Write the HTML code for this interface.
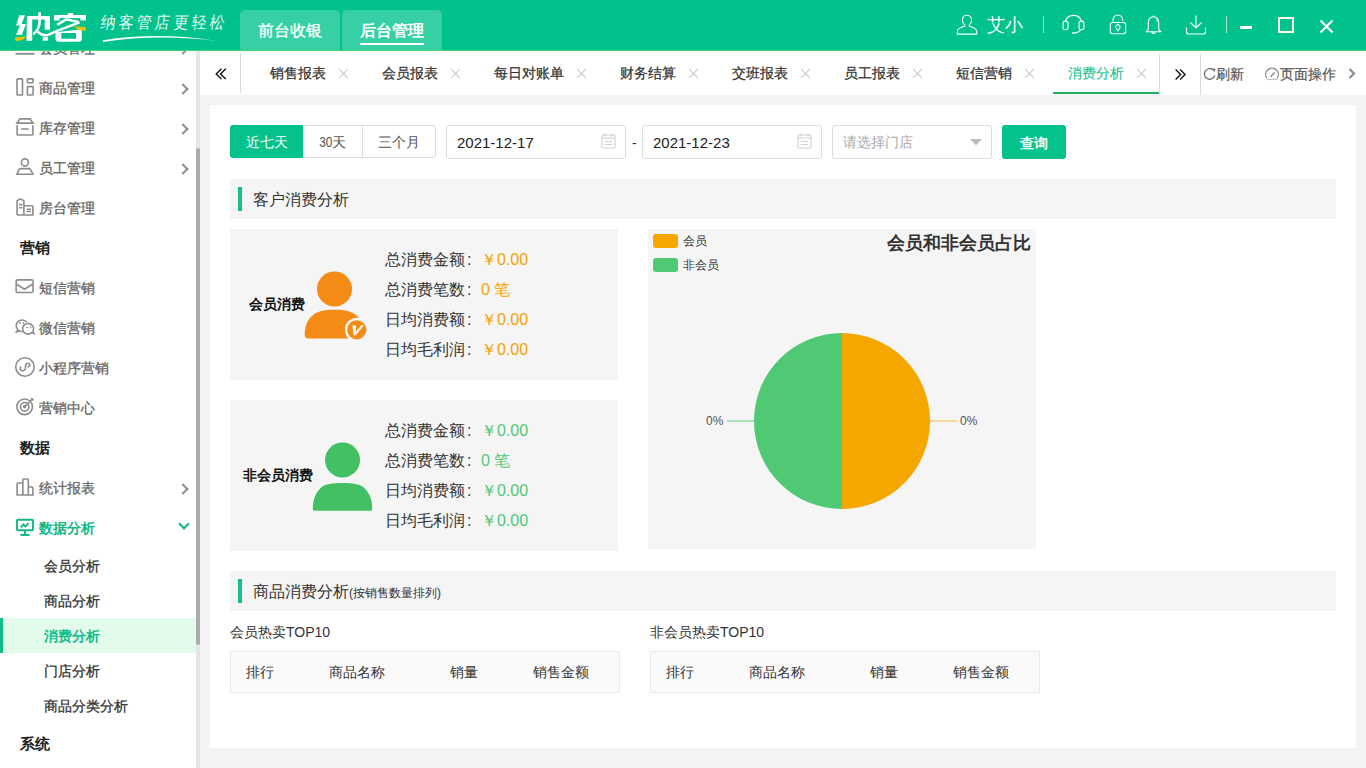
<!DOCTYPE html>
<html><head><meta charset="utf-8">
<style>
*{margin:0;padding:0;box-sizing:border-box}
html,body{width:1366px;height:768px;overflow:hidden;background:#f3f3f3;font-family:"Liberation Sans",sans-serif;color:#333}
.a{position:absolute}
#hdr{left:0;top:0;width:1366px;height:51px;background:#01c28c;border-bottom:1px solid #3fd86f;z-index:5}
.htab{top:10px;width:100px;height:40px;background:#36d0a4;border-radius:5px 5px 0 0;color:#fff;font-size:16px;line-height:22px;padding-top:10px;text-align:center;-webkit-text-stroke:0.3px #fff}
.htab.act{font-weight:bold;-webkit-text-stroke:0}
.htab i{position:absolute;left:18px;top:33px;width:64px;height:2px;background:#fff}
#side{left:0;top:51px;width:200px;height:717px;background:#fff;overflow:hidden}
#tabs{left:200px;top:51px;width:1166px;height:44px;background:#fff}
#card{left:210px;top:105px;width:1146px;height:643px;background:#fff}
.mi{position:absolute;left:0;width:196px;height:40px;font-size:14px;color:#666;-webkit-text-stroke:0.3px #666}
.mi .ic{position:absolute;left:16px;top:10px;fill:none;stroke:#8c8c8c;stroke-width:1.600;overflow:visible}
.mi span{position:absolute;left:39px;top:11px;line-height:18px}
.mi .ar{position:absolute;left:181px;top:15px;width:7px;height:10px}
.mi .ar:before{content:"";position:absolute;left:-2px;top:1.500px;width:6px;height:6px;border-right:2px solid #8e8e9a;border-top:2px solid #8e8e9a;transform:rotate(45deg)}
.mi.grn{color:#13b886;font-weight:bold;-webkit-text-stroke:0}
.mi.grn .ic{stroke:#13b886;stroke-width:1.900}
.mi .dn{position:absolute;left:178px;top:14px;width:11px;height:8px}
.mi .dn:before{content:"";position:absolute;left:2px;top:-2px;width:6px;height:6px;border-right:2.500px solid #13b886;border-bottom:2.500px solid #13b886;transform:rotate(45deg)}
.sec{position:absolute;left:20px;font-size:15px;color:#222;font-weight:bold;line-height:20px}
.sub{position:absolute;left:0;width:196px;height:35px;font-size:14px;color:#333;-webkit-text-stroke:0.3px #333}
.sub span{position:absolute;left:44px;top:9px;line-height:18px}
.sub.on{background:#e3fbea;color:#10bd89;font-weight:bold;-webkit-text-stroke:0}
.sub.on:before{content:"";position:absolute;left:0;top:0;width:3px;height:35px;background:#10bd89}
.tab{position:absolute;top:13px;font-size:14px;color:#333;line-height:18px;-webkit-text-stroke:0.25px currentColor}
.tx{position:absolute;top:18px;stroke:#c8c8c8;stroke-width:1.100;fill:none}
.inp{border:1px solid #dcdcdc;border-radius:3px;background:#fff}
.bg{border:1px solid #dcdcdc;border-radius:3px;background:#fff}
.dt{position:absolute;left:10px;top:8px;font-size:15px;color:#222;line-height:18px}
.cal{position:absolute;left:154px;top:7px}
.num{font-family:"Liberation Sans",sans-serif;display:inline-block;transform:scaleX(.85);margin:0 -1px}
.shd{background:#f5f5f5}
.shd i{position:absolute;left:8px;top:8px;width:4px;height:24px;background:#1bbf8b}
.shd span{position:absolute;left:23px;top:11px;font-size:16px;color:#333;line-height:20px}
.shd small{font-size:12px}
.gcard{background:#f5f5f5}
.lbl{font-size:14px;font-weight:bold;color:#111;line-height:18px}
.stats p{font-size:16px;color:#333;line-height:30px;height:30px;white-space:nowrap}
.stats b{font-weight:normal}
.stats i{font-style:normal;display:inline-block;width:16px;text-indent:2px}
.org b{color:#f5a300}
.grn2 b{color:#52c878}
.pl{font-size:12px;color:#555;line-height:16px}
.thd{width:390px;height:42px;background:#fafafa;border:1px solid #e8e8e8}
.thd span{position:absolute;top:11px;font-size:14px;color:#333;line-height:18px}
</style></head><body>
<div id="hdr" class="a">
  <svg class="a" style="left:0;top:0" width="100" height="50" viewBox="0 0 100 50">
    <g fill="#fff">
      <path d="M19.200 15.200H25L21.600 23.900H26L21.900 34.700H16.100L19.900 25.600H16.100z"/>
      <path d="M26.900 15.900H50V29.700H44.700V19.600H32.200V40.700H26.400z"/>
      <path d="M38.200 12.300H40.900V22C40.900 27 38.500 31.500 34 35.300L32.600 33.600C36.300 30.300 38.200 26.500 38.200 22z"/>
      <path d="M42.800 36.900H48.100V40.700H42.800z"/>
      <path d="M67.800 13.100H73.100V15.200H67.800z"/>
      <path d="M54.100 15H85.900V20.500H80.400V18H59.600V20.500H54.100z"/>
      <path d="M55.500 32.300L81.800 29.200V39C81.800 40.600 80.500 41.700 79 41.700H58.300C56.800 41.700 55.500 40.600 55.500 39zM61.300 33V38.800H76V33z" fill-rule="evenodd"/>
    </g>
    <g fill="none" stroke="#fff" stroke-width="2.500">
      <path d="M57.200 24.900L66 19.400 78.800 22"/>
      <path d="M37.800 31.600C40 34 42 35.200 45 35.200 49 35.200 52 33 57 30.800L79.500 22.300"/>
    </g>
    <path d="M15.100 37.400L25.500 36.400 24.800 37.900C23 39.200 21.500 40.200 19.700 40.700H15.400z" fill="#f8c000"/>
    <path d="M73.600 26.300L85.900 27.300 85.400 30.700 78.900 29.700z" fill="#f8c000"/>
  </svg>
  <div class="a" style="left:99px;top:13px;font-size:15px;color:rgba(255,255,255,.92);letter-spacing:3.2px;line-height:20px;transform:skewX(-8deg) scaleY(1.1);transform-origin:0 100%">纳客管店更轻松</div>
  <svg class="a" style="left:100px;top:33px" width="124" height="10"><path d="M3 7.300Q60 -1.600 119.500 8.400Q60 .6 3 8.900z" fill="#fff"/></svg>
  <div class="a htab" style="left:240px">前台收银</div>
  <div class="a htab act" style="left:342px">后台管理<i></i></div>
  <!-- right -->
  <svg class="a" style="left:956px;top:14px" width="22" height="21" viewBox="0 0 22 21" fill="none" stroke="#fff" stroke-width="1.1"><path d="M11 1.2c-3 0-4.6 2.4-4.6 5 0 2 .9 3.7 2.3 4.7v1.3c-3.3.8-7.4 2.6-7.4 5.4v2.5h19.4v-2.5c0-2.8-4.100-4.6-7.400-5.400v-1.300c1.400-1 2.300-2.700 2.300-4.700 0-2.600-1.600-5-4.600-5z"/></svg>
  <div class="a" style="left:987px;top:13px;font-size:18px;color:#fff;line-height:24px">艾小</div>
  <div class="a" style="left:1043px;top:16px;width:1px;height:17px;background:#9fe6cf"></div>
  <svg class="a" style="left:1062px;top:14px" width="23" height="21" viewBox="0 0 23 21" fill="none" stroke="#fff" stroke-width="1.100"><path d="M3.400 7.300A8.500 8.500 0 0 1 19.600 7.300"/><rect x="1.100" y="7.100" width="4.900" height="8.700" rx="2.200"/><rect x="17" y="7.100" width="4.900" height="8.700" rx="2.200"/><path d="M18.600 15.700C17.500 18 15 19 10.200 19" stroke-width="1.300"/></svg>
  <svg class="a" style="left:1109px;top:14px" width="18" height="21" viewBox="0 0 18 21" fill="none" stroke="#fff" stroke-width="1.100"><path d="M4 7.600V5.900a4.850 4.850 0 0 1 9.700 0v1.200"/><rect x="1.300" y="8.500" width="15.400" height="11.300" rx="2.200"/><path d="M8.900 16.800L7.200 14.300A2.200 2.200 0 1 1 10.600 14.300z"/></svg>
  <svg class="a" style="left:1145px;top:14px" width="17" height="22" viewBox="0 0 17 22" fill="none" stroke="#fff" stroke-width="1.1"><path d="M8.500 1.500v1.200M8.500 2.700c-3.200 0-5.200 2.600-5.200 6.200v5.600c0 1.200-.9 2.500-2.400 3.300h15.200c-1.500-.800-2.400-2.100-2.400-3.300V8.900c0-3.600-2-6.200-5.200-6.200zM6.800 17.800a1.700 1.700 0 0 0 3.400 0"/><path d="M11 5.500c.8.500 1.300 1.300 1.500 2.200" stroke-width="0.9"/></svg>
  <svg class="a" style="left:1185px;top:14px" width="22" height="22" viewBox="0 0 22 22" fill="none" stroke="#fff" stroke-width="1.1"><path d="M11 1.500v12.500M5.500 8.500l5.500 5.500 5.500-5.500M1.500 13.500v4.500c0 1.200.8 2 2 2h15c1.200 0 2-.8 2-2v-4.500" stroke="#fff"/></svg>
  <div class="a" style="left:1226px;top:16px;width:1px;height:17px;background:#9fe6cf"></div>
  <div class="a" style="left:1240px;top:26px;width:12px;height:3px;background:#fff"></div>
  <div class="a" style="left:1278px;top:17px;width:16px;height:16px;border:2px solid #fffbe8"></div>
  <svg class="a" style="left:1319px;top:19px" width="15" height="15" viewBox="0 0 15 15" stroke="#fff" stroke-width="2.200"><path d="M1.500 1.500l12 12M13.500 1.500l-12 12"/></svg>
</div>
<div id="side" class="a">
<!-- y offsets relative to side top = 51 -->
<div class="mi" style="top:-23px"><svg class="ic" width="20" height="20" viewBox="0 0 20 20"><path d="M-.5 15.800H18.500" stroke-width="1.800"/></svg><span>会员管理</span><b class="ar"></b></div>
<div class="mi" style="top:17px"><svg class="ic" width="20" height="20" viewBox="0 0 20 20"><rect x="1" y=".9" width="5.500" height="16.100" rx=".6"/><rect x="11.400" y=".9" width="5.700" height="3.900" rx=".6"/><rect x="11.400" y="8.600" width="5.700" height="8.400" rx=".6"/></svg><span>商品管理</span><b class="ar"></b></div>
<div class="mi" style="top:57px"><svg class="ic" width="20" height="20" viewBox="0 0 20 20"><path d="M.9 5.100H17.100L14 .9H4z"/><path d="M1.100 7.200V16.200q0 .8.8.8h14.200q.8 0 .8-.8V7.200M5.200 11h7.600"/></svg><span>库存管理</span><b class="ar"></b></div>
<div class="mi" style="top:97px"><svg class="ic" width="20" height="20" viewBox="0 0 20 20"><circle cx="8.900" cy="4.400" r="3.500"/><path d="M.9 16.200L3.400 11.200Q4 10.600 5 10.600H12.800Q13.800 10.600 14.400 11.200L16.900 16.200z"/></svg><span>员工管理</span><b class="ar"></b></div>
<div class="mi" style="top:137px"><svg class="ic" width="20" height="20" viewBox="0 0 20 20"><path d="M1.100 17V2.800L4.400.9 7.900 2.800V17M8.500 7.800h7.400q1 0 1 1V17H1.100M3.100 6.600h3.300M3.100 9.800h3.300M10.700 11.200h4.300M10.700 13.500h4.300"/></svg><span>房台管理</span></div>
<div class="sec" style="top:187px">营销</div>
<div class="mi" style="top:217px"><svg class="ic" width="20" height="20" viewBox="0 0 20 20"><rect x=".15" y="1.850" width="16.900" height="12.700" rx="1.500"/><path d="M.2 6L8.500 11.200 16.900 6"/></svg><span>短信营销</span></div>
<div class="mi" style="top:257px"><svg class="ic" width="20" height="20" viewBox="0 0 20 20"><path d="M10.800 4.200A6 6 0 0 0 .2 7.500C.2 9.200 .9 10.700 2 11.800L.6 13.800 3.500 12.900A6 6 0 0 0 6.500 13.600"/><path d="M13 5.600A5.300 5.300 0 1 0 15.500 14.700L17.800 15.400 17 13.300A5.300 5.300 0 0 0 13 5.600z" fill="#fff"/><circle cx="4" cy="5" r=".5" stroke-width="1"/><circle cx="7.300" cy="5" r=".5" stroke-width="1"/><circle cx="11" cy="9.500" r=".5" stroke-width="1"/><circle cx="14.500" cy="9.500" r=".5" stroke-width="1"/></svg><span>微信营销</span></div>
<div class="mi" style="top:297px"><svg class="ic" width="20" height="20" viewBox="0 0 20 20"><circle cx="8.950" cy="9" r="9.200"/><path d="M5.200 8.700C3.700 9.400 3.700 12.400 6.200 12.700 8.300 12.900 9.500 11.600 9.500 10V8C9.500 6.400 10.500 5.200 12 5.200 13.900 5.200 14.600 7.300 13.100 8.400 12.600 8.800 12.100 8.900 11.500 9"/></svg><span>小程序营销</span></div>
<div class="mi" style="top:337px"><svg class="ic" width="20" height="20" viewBox="0 0 20 20"><circle cx="8.650" cy="8.800" r="7.800"/><circle cx="8.650" cy="8.800" r="4.300"/><circle cx="8.650" cy="8.800" r="1" fill="#8c8c8c"/><path d="M8.650 8.800L15.500 2"/><path d="M15 .5L15.200 2.300 17.200 2.500 17.500 1.200 16 .2z" fill="#8c8c8c" stroke-width=".6"/></svg><span>营销中心</span></div>
<div class="sec" style="top:387px">数据</div>
<div class="mi" style="top:417px"><svg class="ic" width="20" height="20" viewBox="0 0 20 20"><path d="M1.100 17V5.800q0-.8.8-.8H6.900V1.800q0-.8.8-.8h3.800q.8 0 .8.8V9h3.800q.8 0 .8.8V17zM6.900 5v12M12.300 9v8"/></svg><span>统计报表</span><b class="ar"></b></div>
<div class="mi grn" style="top:457px"><svg class="ic" width="20" height="20" viewBox="0 0 20 20"><rect x="1" y="1.800" width="16" height="10.400" rx=".8"/><path d="M9 12.500v4M4.500 17h9M4.800 9.300L7.500 6.300 9.500 8.500 12.500 5"/></svg><span>数据分析</span><b class="dn"></b></div>
<div class="sub" style="top:497px"><span>会员分析</span></div>
<div class="sub" style="top:532px"><span>商品分析</span></div>
<div class="sub on" style="top:567px"><span>消费分析</span></div>
<div class="sub" style="top:602px"><span>门店分析</span></div>
<div class="sub" style="top:637px"><span>商品分类分析</span></div>
<div class="sec" style="top:683px">系统</div>
<div class="a" style="left:196px;top:0;width:4px;height:717px;background:#e6e6e6"></div>
<div class="a" style="left:196px;top:97px;width:4px;height:497px;border-radius:2px;background:#ababab"></div>
</div>
<div id="tabs" class="a">
  <svg class="a" style="left:15px;top:17px" width="13" height="12" viewBox="0 0 13 12" fill="none" stroke="#111" stroke-width="1.400"><path d="M6.500 .7L1.200 5.900 6.500 11.100M10.800 .7L5.500 5.900l5.300 5.200"/></svg>
  <div class="a" style="left:40px;top:2px;width:1px;height:40px;background:#d9d9d9"></div>
  <div class="tab" style="left:70px">销售报表</div><svg class="tx" style="left:139px" width="9" height="9"><path d="M0 0L9 9M9 0L0 9"/></svg>
  <div class="tab" style="left:182px">会员报表</div><svg class="tx" style="left:251px" width="9" height="9"><path d="M0 0L9 9M9 0L0 9"/></svg>
  <div class="tab" style="left:294px">每日对账单</div><svg class="tx" style="left:377px" width="9" height="9"><path d="M0 0L9 9M9 0L0 9"/></svg>
  <div class="tab" style="left:420px">财务结算</div><svg class="tx" style="left:489px" width="9" height="9"><path d="M0 0L9 9M9 0L0 9"/></svg>
  <div class="tab" style="left:532px">交班报表</div><svg class="tx" style="left:601px" width="9" height="9"><path d="M0 0L9 9M9 0L0 9"/></svg>
  <div class="tab" style="left:644px">员工报表</div><svg class="tx" style="left:713px" width="9" height="9"><path d="M0 0L9 9M9 0L0 9"/></svg>
  <div class="tab" style="left:756px">短信营销</div><svg class="tx" style="left:825px" width="9" height="9"><path d="M0 0L9 9M9 0L0 9"/></svg>
  <div class="tab" style="left:868px;color:#16bf8b;-webkit-text-stroke:0.1px #16bf8b">消费分析</div><svg class="tx" style="left:937px" width="9" height="9"><path d="M0 0L9 9M9 0L0 9"/></svg>
  <div class="a" style="left:853px;top:41px;width:106px;height:2px;background:#20ae63"></div>
  <div class="a" style="left:959px;top:3px;width:1px;height:41px;background:#d9d9d9"></div>
  <svg class="a" style="left:975px;top:18px" width="12" height="12" viewBox="0 0 12 12" fill="none" stroke="#111" stroke-width="1.400"><path d="M.6 .6l5 5-5 5M5.100 .6l5 5-5 5"/></svg>
  <div class="a" style="left:1000px;top:3px;width:1px;height:41px;background:#d9d9d9"></div>
  <svg class="a" style="left:1003px;top:16px" width="14" height="14" viewBox="0 0 14 14" fill="none" stroke="#666" stroke-width="1.200"><path d="M11.800 8.400A5.300 5.300 0 1 1 10.100 2.900"/><path d="M8.800 1.600L12.400 1.700 11.600 5.200z" fill="#666" stroke="none"/></svg>
  <div class="a" style="left:1016px;top:14px;font-size:14px;color:#555;line-height:18px;-webkit-text-stroke:0.2px #555">刷新</div>
  <svg class="a" style="left:1065px;top:16px" width="15" height="14" viewBox="0 0 15 14" fill="none" stroke="#777" stroke-width="1.100"><path d="M1.800 11A6.300 6.300 0 1 1 12.200 11"/><path d="M1.500 12.400H12.500" stroke="#c4c4c4" stroke-width="1.300"/><path d="M5.600 9.800L9.600 5.400"/></svg>
  <div class="a" style="left:1080px;top:14px;font-size:14px;color:#555;line-height:18px;-webkit-text-stroke:0.2px #555">页面操作</div>
  <svg class="a" style="left:1148px;top:17px" width="8" height="11" viewBox="0 0 8 11" fill="none" stroke="#8c8c9c" stroke-width="2.200"><path d="M1.500 1l4.500 4.500-4.500 4.500"/></svg>
</div>
<div id="card" class="a">
  <!-- filter row: abs coords minus (210,105) -->
  <div class="a bg" style="left:20px;top:20px;width:206px;height:33px"></div>
  <div class="a" style="left:20px;top:20px;width:73px;height:33px;background:#05c18c;border-radius:3px 0 0 3px;color:#fff;font-size:14px;line-height:35px;text-align:center">近七天</div>
  <div class="a" style="left:93px;top:20px;width:59px;height:33px;font-size:14px;line-height:35px;text-align:center;color:#555"><span class="num">30</span>天</div>
  <div class="a" style="left:152px;top:21px;width:1px;height:31px;background:#dcdcdc"></div>
  <div class="a" style="left:152px;top:20px;width:74px;height:33px;font-size:14px;line-height:35px;text-align:center;color:#555">三个月</div>

  <div class="a inp" style="left:236px;top:20px;width:180px;height:34px"><span class="dt">2021-12-17</span><svg class="cal" width="15" height="16" viewBox="0 0 15 16" fill="none" stroke="#cfcfcf" stroke-width="1.100"><rect x="1" y="2" width="13" height="13" rx="1"/><path d="M1 5h13M4 .5v3M11 .5v3M4 8.500h7M4 11.500h7"/></svg></div>
  <div class="a" style="left:422px;top:28px;font-size:14px;color:#333;line-height:20px">-</div>
  <div class="a inp" style="left:432px;top:20px;width:180px;height:34px"><span class="dt">2021-12-23</span><svg class="cal" width="15" height="16" viewBox="0 0 15 16" fill="none" stroke="#cfcfcf" stroke-width="1.100"><rect x="1" y="2" width="13" height="13" rx="1"/><path d="M1 5h13M4 .5v3M11 .5v3M4 8.500h7M4 11.500h7"/></svg></div>
  <div class="a inp" style="left:622px;top:20px;width:160px;height:34px"><span style="position:absolute;left:10px;top:7px;font-size:14px;color:#aaa;line-height:18px">请选择门店</span><svg class="a" style="left:137px;top:13px" width="12" height="7"><path d="M0 0h12L6 6.200z" fill="#bbb"/></svg></div>
  <div class="a" style="left:792px;top:20px;width:64px;height:34px;background:#03c28c;border-radius:3px;color:#fff;font-size:14px;-webkit-text-stroke:0.45px #fff;line-height:36px;text-align:center">查询</div>

  <!-- section 1 -->
  <div class="a shd" style="left:20px;top:74px;width:1106px;height:40px"><i></i><span>客户消费分析</span></div>

  <!-- member card -->
  <div class="a gcard" style="left:20px;top:124px;width:388px;height:151px">
    <div class="a lbl" style="left:19px;top:66px">会员消费</div>
    <svg class="a" style="left:74px;top:42px" width="66" height="72" viewBox="0 0 66 72">
      <circle cx="30.500" cy="18" r="17.500" fill="#f38b14"/>
      <path d="M.7 64C.7 56 3 49 8.500 44.500 13 40.500 20 38.800 30.500 38.800S48 40.500 52.500 44.500C58 49 60.300 56 60.300 64V66c0 .8-.6 1.400-1.400 1.400H4C2 67.400.7 66 .7 64z" fill="#f38b14"/>
      <circle cx="52.800" cy="58.800" r="12" fill="#f5f5f5"/>
      <circle cx="52.800" cy="58.800" r="9.600" fill="#f38b14"/>
      <path d="M48.300 54.600H52L51.700 61.200 57.300 54.300H60L51.600 64.200H49.600z" fill="#fff"/>
    </svg>
    <div class="a stats org" style="left:155px;top:16px">
      <p>总消费金额<i>:</i><b>￥0.00</b></p>
      <p>总消费笔数<i>:</i><b class="c">0 笔</b></p>
      <p>日均消费额<i>:</i><b>￥0.00</b></p>
      <p>日均毛利润<i>:</i><b>￥0.00</b></p>
    </div>
  </div>
  <!-- non member card -->
  <div class="a gcard" style="left:20px;top:295px;width:388px;height:151px">
    <div class="a lbl" style="left:13px;top:66px">非会员消费</div>
    <svg class="a" style="left:82px;top:42px" width="62" height="70" viewBox="0 0 62 70">
      <circle cx="30.500" cy="18" r="17.500" fill="#42c063"/>
      <path d="M0.800 67c0-10 3-17 9-22 4-3 10-4 20.700-4s16.700 1 20.700 4c6 5 9 12 9 22 0 1-1 1.800-2 1.800H2.800c-1 0-2-.8-2-1.800z" fill="#42c063"/>
    </svg>
    <div class="a stats grn2" style="left:155px;top:16px">
      <p>总消费金额<i>:</i><b>￥0.00</b></p>
      <p>总消费笔数<i>:</i><b class="c">0 笔</b></p>
      <p>日均消费额<i>:</i><b>￥0.00</b></p>
      <p>日均毛利润<i>:</i><b>￥0.00</b></p>
    </div>
  </div>
  <!-- chart -->
  <div class="a gcard" style="left:438px;top:124px;width:388px;height:320px">
    <div class="a" style="left:5px;top:5px;width:25px;height:14px;background:#f5a700;border-radius:3px"></div>
    <div class="a" style="left:35px;top:4px;font-size:12px;color:#333;line-height:16px">会员</div>
    <div class="a" style="left:5px;top:29px;width:25px;height:14px;background:#50c974;border-radius:3px"></div>
    <div class="a" style="left:35px;top:28px;font-size:12px;color:#333;line-height:16px">非会员</div>
    <div class="a" style="right:5px;top:3px;font-size:18px;font-weight:bold;color:#333;line-height:22px">会员和非会员占比</div>
    <svg class="a" style="left:0;top:0" width="388" height="320">
      <path d="M194 104A88 88 0 0 1 194 280z" fill="#f5a700"/>
      <path d="M194 104A88 88 0 0 0 194 280z" fill="#50c974"/>
      <path d="M282 192h27" stroke="#f8cf7a" stroke-width="1.500"/>
      <path d="M79 192h27" stroke="#8edba4" stroke-width="1.500"/>
    </svg>
    <div class="a pl" style="left:58px;top:184px">0%</div>
    <div class="a pl" style="left:312px;top:184px">0%</div>
  </div>

  <!-- section 2 -->
  <div class="a shd" style="left:20px;top:466px;width:1106px;height:40px"><i></i><span>商品消费分析<small>(按销售数量排列)</small></span></div>
  <div class="a" style="left:20px;top:518px;font-size:14px;color:#333;line-height:18px">会员热卖TOP10</div>
  <div class="a" style="left:440px;top:518px;font-size:14px;color:#333;line-height:18px">非会员热卖TOP10</div>
  <div class="a thd" style="left:20px;top:546px"><span style="left:15px">排行</span><span style="left:98px">商品名称</span><span style="left:219px">销量</span><span style="left:302px">销售金额</span></div>
  <div class="a thd" style="left:440px;top:546px"><span style="left:15px">排行</span><span style="left:98px">商品名称</span><span style="left:219px">销量</span><span style="left:302px">销售金额</span></div>
</div>
</body></html>
